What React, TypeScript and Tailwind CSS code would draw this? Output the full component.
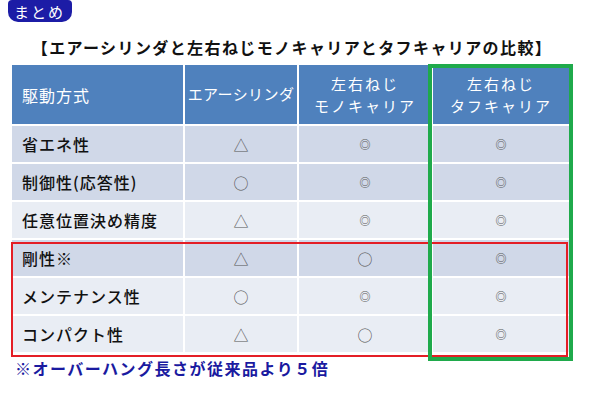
const font = { fontFamily: '"Noto Sans CJK JP", "Noto Sans", sans-serif' };

type Row = { label: string; cells: string[]; dark: boolean };

const rows: Row[] = [
  { label: "省エネ性", cells: ["△", "◎", "◎"], dark: true },
  { label: "制御性(応答性)", cells: ["○", "◎", "◎"], dark: true },
  { label: "任意位置決め精度", cells: ["△", "◎", "◎"], dark: false },
  { label: "剛性※", cells: ["△", "○", "◎"], dark: true },
  { label: "メンテナンス性", cells: ["○", "◎", "◎"], dark: false },
  { label: "コンパクト性", cells: ["△", "○", "◎"], dark: false },
];

function Mark({ c }: { c: string }) {
  if (c === "◎") {
    return <span className="text-[11px] font-bold leading-none text-[#5a5a5a]">◎</span>;
  }
  return <span className="text-[15px] leading-none text-[#555]">{c}</span>;
}

export default function App() {
  return (
    <div className="relative w-[590px] h-[402px] bg-white overflow-hidden" style={font}>
      <div className="ml-2 w-[64px] h-[22px] rounded-b-[10px] rounded-t-[4px] bg-[#1c1ca6] flex items-center pl-[6px] text-white text-[15px] tracking-[2px] leading-none">
        まとめ
      </div>

      <h1 className="mt-[16px] pr-[6px] text-center text-[16px] font-bold leading-[18px] text-[#111] tracking-[1.4px]">
        【エアーシリンダと左右ねじモノキャリアとタフキャリアの比較】
      </h1>

      <div className="ml-3 mt-[9px] w-[555px] grid grid-cols-[171px_112px_132px_136px] gap-[2px] bg-white">
        <div className="h-[59px] bg-[#4f81bd] flex items-center pl-[10px] text-white text-[16px] tracking-[1px]">駆動方式</div>
        <div className="h-[59px] bg-[#4f81bd] flex items-center justify-center text-white text-[15px] tracking-[0.4px]">エアーシリンダ</div>
        <div className="h-[59px] bg-[#4f81bd] flex flex-col items-center justify-center text-white text-[15px] leading-[22px] tracking-[2px]">
          <span>左右ねじ</span>
          <span>モノキャリア</span>
        </div>
        <div className="h-[59px] bg-[#4f81bd] flex flex-col items-center justify-center text-white text-[15px] leading-[22px] tracking-[2px]">
          <span>左右ねじ</span>
          <span>タフキャリア</span>
        </div>

        {rows.map((r) => {
          const bg = r.dark ? "bg-[#d0d8e8]" : "bg-[#e9edf4]";
          return [
            <div key={r.label} className={`h-[36px] ${bg} flex items-center pl-[10px] text-[16px] font-medium tracking-[1px] text-[#111]`}>
              {r.label}
            </div>,
            ...r.cells.map((c, i) => (
              <div key={r.label + i} className={`h-[36px] ${bg} flex items-center justify-center`}>
                <Mark c={c} />
              </div>
            )),
          ];
        })}
      </div>

      <p className="ml-[15px] mt-[6px] text-[16px] font-bold text-[#1a1aa0] tracking-[1.5px] leading-[20px]">
        ※オーバーハング長さが従来品より５倍
      </p>

      <div className="absolute left-[11px] top-[242px] w-[557px] h-[115px] border-2 border-[#e41e26]" />
      <div className="absolute left-[428px] top-[64px] w-[145px] h-[297px] border-4 border-[#1faa4b]" />
    </div>
  );
}
